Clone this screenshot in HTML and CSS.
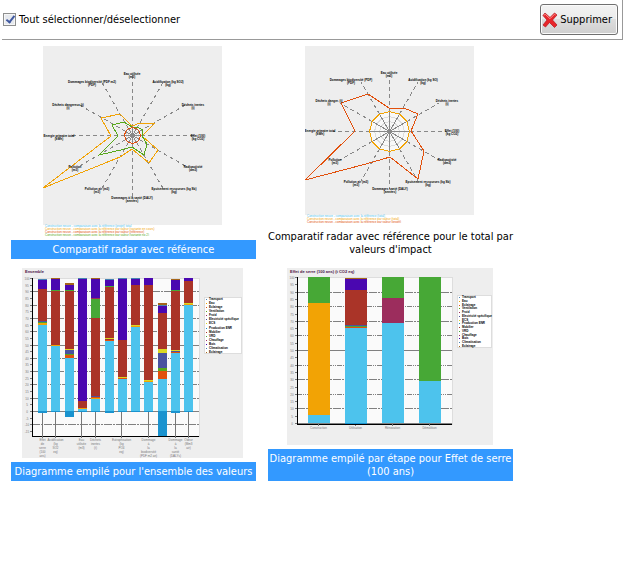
FILE: index.html
```
<!DOCTYPE html>
<html lang="fr">
<head>
    <meta charset="utf-8">
    <title>Graphiques</title>
    <link rel="stylesheet" href="styles.css">
</head>
<body>
    <div class="toolbar">
        <input type="checkbox" id="selectAll" checked>
        <label for="selectAll">Tout sélectionner/déselectionner</label>
        <button type="button" class="delete">
            <svg width="16" height="16" viewBox="0 0 16 16" aria-hidden="true">
                <path d="M3 1 L8 5.5 L12.5 1 L15 3 L10.5 8 L15 13 L12.5 15.5 L7.5 10.5 L3.5 15 L1 13 L5 8 L1 3.5 Z" fill="#e8252a" stroke="#b5141b" stroke-width="0.7"/>
                <path d="M2 3.3 L3.2 2.2 L8 6.7 L12.5 2.2 L13.6 3" fill="none" stroke="#ff8f8c" stroke-width="1"/>
            </svg>
            Supprimer
        </button>
    </div>

    <div class="gallery">
        <figure class="item selected">
            <svg id="radarRef" width="179" height="190" viewBox="0 0 179 190"></svg>
            <figcaption>Comparatif radar avec référence</figcaption>
        </figure>
        <figure class="item">
            <svg id="radarTotal" width="169" height="177" viewBox="0 0 169 177"></svg>
            <figcaption>Comparatif radar avec référence pour le total par valeurs d'impact</figcaption>
        </figure>
        <figure class="item selected">
            <svg id="stackAll" width="221" height="190" viewBox="0 0 221 190"></svg>
            <figcaption>Diagramme empilé pour l'ensemble des valeurs</figcaption>
        </figure>
        <figure class="item selected">
            <svg id="stackStep" width="206" height="177" viewBox="0 0 206 177"></svg>
            <figcaption>Diagramme empilé par étape pour Effet de serre (100 ans)</figcaption>
        </figure>
    </div>

    <script src="charts.js"></script>
</body>
</html>
```
FILE: styles.css
```
body {
    font-family: "DejaVu Sans Condensed", Tahoma, "DejaVu Sans", sans-serif;
    font-size: 11px;
    line-height: 13px;
    color: #000;
    background-color: #fff;
    margin: 0;
}

.toolbar {
    display: flex;
    align-items: center;
    box-sizing: border-box;
    height: 40px;
    margin: 0 0 0 2px;
    padding: 0 4px 0 1px;
    border-right: 1px solid #999;
    border-bottom: 1px solid #999;
}

.toolbar input {
    appearance: none;
    width: 13px;
    height: 13px;
    margin: 0 3px 0 0;
    border: 1px solid #8e8f8f;
    background-color: #e6e9ee;
    box-shadow: inset 0 0 0 1px #f6f6f6;
    position: relative;
}

.toolbar input:checked::after {
    content: "";
    position: absolute;
    left: 4px;
    top: 0;
    width: 3px;
    height: 7px;
    border: solid #4059a0;
    border-width: 0 2px 2px 0;
    transform: rotate(38deg);
}

.delete {
    display: flex;
    align-items: center;
    gap: 2px;
    height: 31px;
    margin-left: auto;
    padding: 0 5px 0 1px;
    font: inherit;
    color: #000;
    border: 1px solid #707070;
    border-radius: 3px;
    background: linear-gradient(#f2f2f2, #ebebeb 50%, #dddddd 50%, #cfcfcf);
    box-shadow: inset 0 0 0 1px #fbfbfb;
}

.gallery {
    display: flex;
    flex-wrap: wrap;
    gap: 9px 12px;
    padding: 6px 11px;
}

.item {
    display: flex;
    flex-direction: column;
    align-items: center;
    gap: 4px;
    width: 245px;
    margin: 0;
}

.item figcaption {
    box-sizing: border-box;
    width: 100%;
    padding: 3px 0;
    text-align: center;
}

.selected figcaption {
    color: #fff;
    background-color: #3399ff;
}

.item svg {
    display: block;
    margin-right: 2px;
    font-family: "Liberation Sans", Arial, sans-serif;
    font-size: 3px;
    shape-rendering: crispEdges;
}

.title {
    font-size: 4px;
    font-weight: bold;
    fill: #4b1346;
}

.axis-label {
    text-anchor: middle;
    font-weight: bold;
    fill: #000;
}

.tick-label {
    text-anchor: middle;
    fill: #777;
}

.post {
    font-weight: bold;
}
```
FILE: charts.js
```
const C = {
    cyan: '#4dc3ed', deep: '#1a93cf', amber: '#f2a305', orange: '#e2500c',
    green: '#47a836', leaf: '#57a81a', red: '#aa3428', purple: '#4a07b0',
    blue: '#4a529f', steel: '#4682b4', brown: '#a5651a', lime: '#dcd722',
    plum: '#9c2d5d'
};

function rect(x, y, w, h, fill, extra = '') {
    return `<rect x="${x}" y="${y}" width="${w}" height="${h}" fill="${fill}" ${extra}/>`;
}

function line(x1, y1, x2, y2, color, extra = '') {
    return `<line x1="${x1}" y1="${y1}" x2="${x2}" y2="${y2}" stroke="${color}" ${extra}/>`;
}

function text(x, y, cls, content) {
    return `<text x="${x}" y="${y}" class="${cls}">${content}</text>`;
}

function spoke(cx, cy, i, r) {
    const a = i * Math.PI / 6;
    return [cx + r * Math.sin(a), cy - r * Math.cos(a)];
}

function ring(cx, cy, r, color, fill = 'none') {
    const pts = [...Array(12).keys()].map(i => spoke(cx, cy, i, r).join(','));
    return `<polygon points="${pts.join(' ')}" fill="${fill}" stroke="${color}"/>`;
}

function radar(id, o) {
    let s = rect(0, 0, o.size, o.size, '#eeeeee');
    s += ring(o.cx, o.cy, o.inner, '#dddddd', '#f8f8f8');
    for (let k = 1; k < 4; k++) {
        s += ring(o.cx, o.cy, o.inner * k / 4, '#dddddd');
    }
    for (let i = 0; i < 12; i++) {
        s += line(o.cx, o.cy, ...spoke(o.cx, o.cy, i, o.inner), '#888888');
        s += line(...spoke(o.cx, o.cy, i, o.inner), ...spoke(o.cx, o.cy, i, o.outer), '#888888', 'stroke-dasharray="4 3"');
    }
    o.series.forEach(p => {
        s += p.r ? ring(o.cx, o.cy, p.r, p.color)
            : `<polygon points="${p.points}" fill="none" stroke="${p.color}"/>`;
    });
    o.labels.forEach(([x, y, name, unit]) => {
        s += text(x, y + 1, 'axis-label', name) + text(x, y + 4, 'axis-label', unit);
    });
    o.legend.forEach(([y, color, name]) => {
        s += `<text x="2" y="${y + 1}" fill="${color}">${name}</text>`;
    });
    document.getElementById(id).innerHTML = s;
}

radar('radarRef', {
    size: 179, cx: 89.5, cy: 89.5, inner: 8, outer: 61,
    series: [
        { color: C.amber, points: '89,80 97,77 112,77 99,90 115,104 106,117 89,103 77,111 0,142 68,90 58,72 77,68' },
        { color: C.leaf, points: '89,81 94,81 100,84 99,90 104,98 101,109 89,101 82,103 56,109 75,90 69,79 81,76' },
        { color: C.orange, r: 8 }
    ],
    labels: [
        [89, 28, 'Eau utilisée', '(m3)'],
        [125, 36, 'Acidification (kg SO2)', '(kg)'],
        [150, 59, 'Déchets inertes', '(t)'],
        [155, 90, 'Effet (100)', '(kg CO2)'],
        [150, 121, 'Radioactivité', '(dm3)'],
        [131, 143, 'Epuisement ressources (kg Sb)', '(kg)'],
        [89, 152, 'Dommages à la santé (DALY)', '(années)'],
        [54, 143, 'Pollution air (m3)', '(m3)'],
        [32, 121, 'Pollution', '(m3)'],
        [16, 90, 'Energie primaire total', '(kWh)'],
        [25, 59, 'Déchets dangereux (t)', '(t)'],
        [49, 36, 'Dommages biodiversité (PDF m2)', '(PDF)']
    ],
    legend: [
        [180, C.cyan, 'Construction neuve - comparaison avec la référence (projet) total'],
        [183, C.amber, 'Construction neuve - comparaison avec la référence par valeur (variante en cours)'],
        [186, C.orange, 'Construction neuve - comparaison avec la référence par valeur (référence)'],
        [189, C.leaf, 'Construction neuve - comparaison avec la référence par valeur (variante no 2)']
    ]
});

radar('radarTotal', {
    size: 169, cx: 84.5, cy: 85.5, inner: 20, outer: 57,
    series: [
        { color: C.amber, r: 20 },
        { color: C.orange, points: '84,62 99,62 113,68 106,85 119,105 113,133 85,111 61,118 0,134 50,85 36,57 63,48' }
    ],
    labels: [
        [84, 27, 'Eau utilisée', '(m3)'],
        [118, 34, 'Acidification (kg SO)', '(kg)'],
        [142, 55, 'Déchets inertes', '(t)'],
        [147, 85, 'Effet (100)', '(kg CO2)'],
        [142, 114, 'Radioactivité', '(dm3)'],
        [123, 136, 'Epuisement ressources (kg Sb)', '(kg)'],
        [85, 143, 'Dommages santé (DALY)', '(années)'],
        [51, 136, 'Pollution air (m3)', '(m3)'],
        [30, 114, 'Pollution', '(m3)'],
        [15, 85, 'Energie primaire total', '(kWh)'],
        [24, 55, 'Déchets danger. (t)', '(t)'],
        [46, 34, 'Dommages biodiversité (PDF)', '(PDF)']
    ],
    legend: [
        [170, C.cyan, 'Construction neuve - comparaison avec la référence (total)'],
        [173, C.amber, 'Construction neuve - comparaison avec la référence par valeur (total)'],
        [176, C.orange, 'Construction neuve - comparaison avec la référence par valeur (projet)']
    ]
});

const posts = [
    ['Transport', C.steel], ['Eau', C.amber], ['Eclairage', C.orange], ['Ventilation', C.leaf],
    ['Froid', C.plum], ['Electricité spécifique', C.blue], ['ECS', C.lime], ['Production ENR', C.deep],
    ['Mobilier', C.red], ['VRD', C.green], ['Chauffage', C.plum], ['Bois', C.purple],
    ['Climatisation', C.steel], ['Eclairage', C.brown]
];

function stacked(id, o) {
    let s = rect(0, 0, o.width, o.height, '#eeeeee');
    s += rect(o.left, o.top, o.right - o.left, o.bottom - o.top, '#fafafa', 'stroke="#dddddd"');
    s += text(3, 5, 'title', o.title);

    const unit = (o.zero - o.top) / 100;
    for (let v = o.min; v <= 100; v += 5) {
        const y = Math.round(o.zero - v * unit) + 0.5;
        s += line(o.left - 2, y, o.left, y, '#777777');
        s += text(o.left - 5, y + 1, 'tick-label', v);
        if (v % 10 === 0 && v < 100) {
            const dash = v % 50 === 0 ? '' : v % 20 === 0 ? '5 1 1 1 1 1' : '8 1 2 1';
            s += line(o.left, y, o.right, y, '#808080', `stroke-dasharray="${dash}"`);
        }
    }

    // each segment: colour, then the y of its upper edge
    o.bars.forEach((segments, i) => {
        const x = Math.round(o.first + i * o.step);
        let y = o.zero;
        segments.forEach(([color, top]) => {
            s += rect(x, top, o.barWidth, y - top, C[color]);
            y = top;
        });
        if (o.below[i]) {
            s += rect(x, o.zero, o.barWidth, o.below[i], C.deep);
        }
    });

    s += rect(o.left, o.top, 1, o.bottom - o.top, '#000');
    s += rect(o.left, o.bottom, o.right - o.left, 1, '#000');
    o.names.forEach(([i, ...lines]) => {
        const x = Math.round(o.first + i * o.step + o.barWidth / 2) - 0.5;
        s += line(x, o.zero + (o.below[i] || 0), x, o.bottom + 2, '#777777');
        lines.forEach((t, n) => {
            s += text(x, o.bottom + 5 + n * 4, 'tick-label', t);
        });
    });

    const [lx, ly, lw, lh] = o.legend;
    s += rect(lx + 0.5, ly + 0.5, lw, lh, '#fff', 'stroke="#dddddd"');
    posts.forEach(([name, color], i) => {
        const y = ly + 2 + i * (lh - 3) / 13;
        s += rect(lx + 2, Math.round(y), 1, 1, color);
        s += text(lx + 5, y + 1, 'post', name);
    });
    document.getElementById(id).innerHTML = s;
}

stacked('stackAll', {
    title: 'Ensemble', width: 221, height: 190,
    left: 10, right: 177, top: 10, bottom: 168, zero: 143, min: -15,
    first: 16, step: 13.3, barWidth: 9, legend: [182, 29, 37, 56],
    bars: [
        [['cyan', 57], ['amber', 55], ['green', 54], ['blue', 53], ['red', 21], ['purple', 12], ['steel', 11]],
        [['cyan', 78], ['amber', 77], ['red', 23], ['green', 22], ['purple', 11], ['brown', 10]],
        [['cyan', 90], ['orange', 87], ['leaf', 86], ['blue', 82], ['lime', 81], ['red', 23], ['green', 22], ['purple', 17], ['brown', 15]],
        [['cyan', 141], ['amber', 140], ['red', 133], ['purple', 11], ['steel', 10]],
        [['cyan', 131], ['amber', 130], ['orange', 129], ['blue', 128], ['red', 50], ['green', 31], ['plum', 30], ['purple', 11], ['brown', 10]],
        [['cyan', 73], ['orange', 72], ['red', 71], ['lime', 70], ['red', 19], ['green', 18], ['purple', 12], ['steel', 11]],
        [['cyan', 111], ['orange', 110], ['lime', 109], ['red', 72], ['purple', 11], ['steel', 10]],
        [['cyan', 59], ['amber', 58], ['lime', 57], ['red', 17], ['purple', 11], ['steel', 10]],
        [['cyan', 114], ['amber', 113], ['lime', 112], ['red', 17], ['purple', 10]],
        [['cyan', 111], ['orange', 103], ['leaf', 100], ['blue', 85], ['lime', 81], ['red', 45], ['purple', 38], ['steel', 37], ['brown', 35]],
        [['cyan', 85], ['orange', 84], ['blue', 83], ['lime', 82], ['red', 23], ['green', 22], ['purple', 12], ['brown', 11]],
        [['cyan', 37], ['amber', 36], ['lime', 35], ['red', 13], ['purple', 10]]
    ],
    below: [2, 1, 6, 1, 1, 2, 1, 1, 1, 26, 2, 1],
    names: [
        [0, 'Effet', 'de', 'serre', '(100', 'ans)'],
        [1, 'Acidification', '(kg', 'SO2', 'eq)'],
        [3, 'Eau', 'utilisée', '(m3)'],
        [4, 'Déchets', 'inertes', '(t)'],
        [6, 'Eutrophisation', '(kg', 'PO4', 'eq)'],
        [8, 'Dommage', 'à', 'la', 'biodiversité', '(PDF m2 an)'],
        [10, 'Dommage', 'à', 'la', 'santé', '(DALYs)'],
        [11, 'Odeur', '(Mm3', 'air)']
    ]
});

stacked('stackStep', {
    title: 'Effet de serre (100 ans) (t CO2 eq)', width: 206, height: 177,
    left: 10, right: 165, top: 9, bottom: 156, zero: 155, min: 0,
    first: 21, step: 37, barWidth: 22, legend: [170, 27, 34, 52],
    bars: [
        [['cyan', 147], ['amber', 35], ['green', 9]],
        [['cyan', 60], ['orange', 59], ['green', 58], ['blue', 57], ['red', 22], ['purple', 11], ['brown', 10]],
        [['cyan', 55], ['plum', 30], ['green', 9]],
        [['cyan', 113], ['green', 9]]
    ],
    below: [0, 2, 0, 0],
    names: [[0, 'Construction'], [1, 'Utilisation'], [2, 'Rénovation'], [3, 'Démolition']]
});
```
